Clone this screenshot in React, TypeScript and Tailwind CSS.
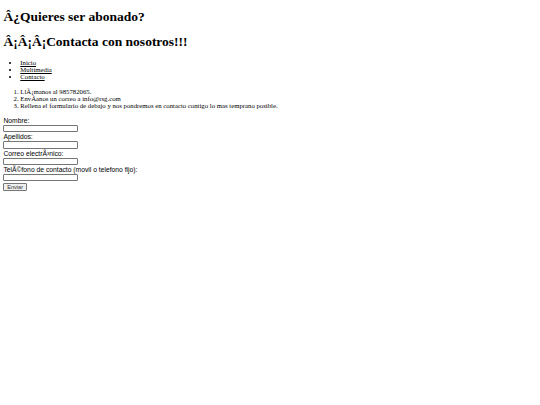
import React from 'react';

// Page drawn at 0.421875 of its natural size (1280 -> 540)
const App: React.FC = () => {
  const inputClass =
    "block w-[75px] h-[7.4px] mb-[1.2px] border-[0.5px] border-[#767676] rounded-[1px] bg-white text-[5.6px] font-['Liberation_Sans',Arial,sans-serif]";

  return (
    <div className="w-[540px] min-h-[405px] bg-white px-[3.4px] pt-[0.5px] text-[6.75px] leading-[normal] text-black font-['Liberation_Serif','Times_New_Roman',serif]">
      <h1 className="text-[13.5px] font-bold leading-[normal] mt-[8px] mb-[9px]">Â¿Quieres ser abonado?</h1>
      <h1 className="text-[13.5px] font-bold leading-[normal] my-[9px]">Â¡Â¡Â¡Contacta con nosotros!!!</h1>

      <ul className="list-disc pl-[16.9px] mt-[6.75px] mb-[8.5px]">
        <li><a href="#" className="underline">Inicio</a></li>
        <li><a href="#" className="underline">Multimedia</a></li>
        <li><a href="#" className="underline">Contacto</a></li>
      </ul>

      <ol className="list-decimal pl-[16.9px] my-[6.75px]">
        <li>LlÃ¡manos al 985782065.</li>
        <li>EnvÃ­anos un correo a info@rsg.com</li>
        <li>Rellena el formulario de debajo y nos pondremos en contacto contigo lo mas temprano posible.</li>
      </ol>

      {/* Formulario de contacto */}
      <form className="pt-[1.25px] font-['Liberation_Sans',Arial,sans-serif] text-[6.75px] leading-[normal]">
        <label className="block leading-[7.8px]">Nombre:</label>
        <input type="text" className={inputClass} />
        <label className="block leading-[7.8px]">Apellidos:</label>
        <input type="text" className={inputClass} />
        <label className="block leading-[7.8px]">Correo electrÃ³nico:</label>
        <input type="text" className={inputClass} />
        <label className="block leading-[7.8px]">TelÃ©fono de contacto (movil o telefono fijo):</label>
        <input type="text" className={inputClass} />
        <button
          type="submit"
          className="h-[7.8px] bg-[#efefef] border-[0.5px] border-[#767676] rounded-[1px] px-[2.8px] leading-none text-[5.6px] text-[#333] font-['Liberation_Sans',Arial,sans-serif]"
        >
          Enviar
        </button>
      </form>
    </div>
  );
};

export default App;
